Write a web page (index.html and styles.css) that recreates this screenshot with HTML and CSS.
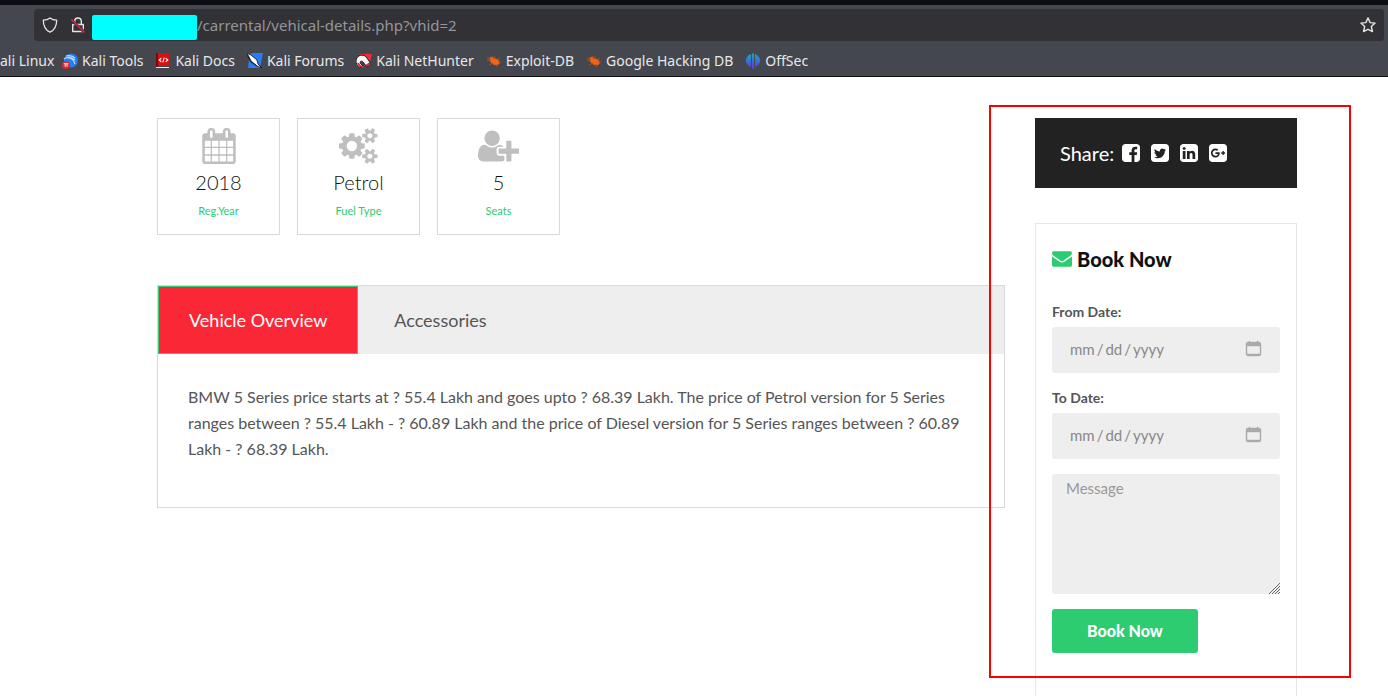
FILE: index.html
```html
<!DOCTYPE html>
<html lang="en">
<head>
<meta charset="utf-8">
<meta name="viewport" content="width=device-width, initial-scale=1">
<title>Car Rental | Vehicle Details</title>
<link rel="stylesheet" href="styles.css">
</head>
<body>
<header class="browser">
  <div class="urlbar">
    <svg class="url-icon" viewBox="0 0 16 16"><path d="M8 .9c2 1.500 4.300 2.100 6.700 2.300 0 5.500-1.700 9.600-6.700 12-5-2.400-6.700-6.500-6.700-12C3.700 3 6 2.400 8 .9z" fill="none" stroke="#e4e4e4" stroke-width="1.300" stroke-linejoin="round"/></svg>
    <svg class="url-icon" viewBox="0 0 16 16"><path d="M2.700 7.500h10.600v7H2.700zM4.700 7.500V4.300a3.300 3.300 0 0 1 6.600 0v3.200" fill="none" stroke="#e4e4e4" stroke-width="1.400" stroke-linejoin="round"/><path d="M1.500 3l13.300 12.500" stroke="#313136" stroke-width="3"/><path d="M1.200 2.200l13.500 13.300" stroke="#e22850" stroke-width="1.300"/></svg>
    <span class="host"></span><span class="path">/carrental/vehical-details.php?vhid=2</span>
    <svg class="url-icon star" viewBox="0 0 16 16"><path d="M8 .9l2.100 4.700 5 .5-3.800 3.400 1.200 5-4.500-2.200-4.500 2.200 1.200-5L.9 6.100l5-.5z" fill="none" stroke="#e4e4e4" stroke-width="1.400" stroke-linejoin="round"/></svg>
  </div>
  <nav class="bookmarks">
    <a href="#">ali Linux</a>
    <a href="#"><svg viewBox="0 0 16 16"><circle cx="9" cy="7.500" r="7" fill="#267cf0"/><path d="M2 6c4-3 7-2 11 1M6 5c4 0 6 2 7 6M4 3c4-1 6 0 9 2" stroke="#b9dcff" stroke-width="1.200" fill="none"/><circle cx="4" cy="12" r="3.900" fill="#e32532"/><path d="M1.800 10.700h4.600M3.200 10.700v3M5 10.700v3" stroke="#fff" stroke-width=".9"/></svg>Kali Tools</a>
    <a href="#"><svg viewBox="0 0 16 16"><path d="M1 0h2v14H1z" fill="#7b0710"/><path d="M3 0h11v13H3z" fill="#db1010"/><path d="M1 14h13v1H1z" fill="#eee"/><path d="M6.300 5.200L4.200 7l2.100 1.800M10.700 5.200L12.800 7l-2.100 1.800M9.200 4.700L7.800 9.300" stroke="#fff" fill="none" stroke-width="1.100"/></svg>Kali Docs</a>
    <a href="#"><svg viewBox="0 0 16 16"><path d="M4 0h12l-3 15H1l1-9z" fill="#267df5"/><path d="M0 0l4 2 6 5 1 4 4 4-5-2-6-5z" fill="#fff" stroke="#171b24" stroke-width=".9"/><path d="M0 2l4 7 6 4" fill="none" stroke="#171b24"/></svg>Kali Forums</a>
    <a href="#"><svg viewBox="0 0 16 16"><path d="M3 1h13l-3 12z" fill="#f02b38"/><path d="M0 8c0-6 8-8 11-3l4 6-4 3-4-5c-2-2-4 0-2 2l3 3c-4 2-8-1-8-6z" fill="#f5f5f5" stroke="#1c1c22"/><path d="M2 10c1 3 3 4 6 4M10 13l4-3" stroke="#d92031" stroke-width="2" fill="none"/></svg>Kali NetHunter</a>
    <a href="#"><svg viewBox="0 0 16 16"><path d="M3 5c2-2 5-1 7 1 2 0 4 2 4 4l-2 2c-3 1-7-1-8-4z" fill="#f36512"/><path d="M1 7l4 1M3 12l4-2M6 3l2 3M9 3v3M12 6l2-1M12 9l3 0M10 11l1 3M1 5l4 1" stroke="#a34f26"/></svg>Exploit-DB</a>
    <a href="#"><svg viewBox="0 0 16 16"><path d="M3 5c2-2 5-1 7 1 2 0 4 2 4 4l-2 2c-3 1-7-1-8-4z" fill="#f36512"/><path d="M1 7l4 1M3 12l4-2M6 3l2 3M9 3v3M12 6l2-1M12 9l3 0M10 11l1 3M1 5l4 1" stroke="#a34f26"/></svg>Google Hacking DB</a>
    <a href="#"><svg viewBox="0 0 16 16"><defs><linearGradient id="offsec" x2="0" y2="1"><stop stop-color="#17a9c4"/><stop offset="1" stop-color="#6038dc"/></linearGradient></defs><path d="M6 1v13C-1 11-1 4 6 1zM10 1v13C17 11 17 4 10 1zM7 .5h2V16H7z" fill="url(#offsec)"/></svg>OffSec</a>
  </nav>
</header>

<div class="page">
  <main class="details">
    <ul class="features">
      <li>
        <svg viewBox="0 0 1792 1792"><path d="M192 1664h288v-288h-288v288zm352 0h320v-288h-320v288zm-352-352h288v-320h-288v320zm352 0h320v-320h-320v320zm-352-384h288v-288h-288v288zm736 736h320v-288h-320v288zm-384-736h320v-288h-320v288zm768 736h288v-288h-288v288zm-384-352h320v-320h-320v320zm-352-864v-288q0-13-9.500-22.500t-22.500-9.500h-64q-13 0-22.500 9.500t-9.500 22.500v288q0 13 9.500 22.500t22.500 9.500h64q13 0 22.500-9.500t9.500-22.500zm736 864h288v-320h-288v320zm-384-384h320v-288h-320v288zm384 0h288v-288h-288v288zm32-480v-288q0-13-9.500-22.500t-22.500-9.500h-64q-13 0-22.500 9.500t-9.500 22.500v288q0 13 9.500 22.500t22.500 9.500h64q13 0 22.500-9.500t9.500-22.500zm384-64v1280q0 52-38 90t-90 38h-1408q-52 0-90-38t-38-90v-1280q0-52 38-90t90-38h128v-96q0-66 47-113t113-47h64q66 0 113 47t47 113v96h384v-96q0-66 47-113t113-47h64q66 0 113 47t47 113v96h128q52 0 90 38t38 90z"/></svg>
        <h5>2018</h5><p>Reg.Year</p>
      </li>
      <li>
        <svg viewBox="-64 0 1920 1792"><path d="M832 896q0-106-75-181t-181-75-181 75-75 181 75 181 181 75 181-75 75-181zm768 512q0-52-38-90t-90-38-90 38-38 90q0 53 37.500 90.500t90.500 37.500 90.500-37.500 37.500-90.500zm0-1024q0-52-38-90t-90-38-90 38-38 90q0 53 37.500 90.500t90.500 37.500 90.500-37.500 37.500-90.500zm-384 421v185q0 10-7 19.500t-16 10.500l-155 24q-11 35-32 76 34 48 90 115 7 11 7 20 0 12-7 19-23 30-82.500 89.500t-78.500 59.500q-11 0-21-7l-115-90q-37 19-77 31-11 108-23 155-7 24-30 24h-186q-11 0-20-7.500t-10-17.500l-23-153q-34-10-75-31l-118 89q-7 7-20 7-11 0-21-8-144-133-144-160 0-9 7-19 10-14 41-53t47-61q-23-44-35-82l-152-24q-10-1-17-9.500t-7-19.500v-185q0-10 7-19.500t16-10.500l155-24q11-35 32-76-34-48-90-115-7-11-7-20 0-12 7-20 22-30 82-89t79-59q11 0 21 7l115 90q34-18 77-32 11-108 23-154 7-24 30-24h186q11 0 20 7.500t10 17.500l23 153q34 10 75 31l118-89q8-7 20-7 11 0 21 8 144 133 144 160 0 8-7 19-12 16-42 54t-45 60q23 48 34 82l152 23q10 2 17 10.500t7 19.500zm640 533v140q0 16-149 31-12 27-30 52 51 113 51 138 0 4-4 7-122 71-124 71-8 0-46-47t-52-68q-20 2-30 2t-30-2q-14 21-52 68t-46 47q-2 0-124-71-4-3-4-7 0-25 51-138-18-25-30-52-149-15-149-31v-140q0-16 149-31 13-29 30-52-51-113-51-138 0-4 4-7 4-2 35-20t59-34 30-16q8 0 46 46.500t52 67.500q20-2 30-2t30 2q51-71 92-112l6-2q4 0 124 70 4 3 4 7 0 25-51 138 17 23 30 52 149 15 149 31zm0-1024v140q0 16-149 31-12 27-30 52 51 113 51 138 0 4-4 7-122 71-124 71-8 0-46-47t-52-68q-20 2-30 2t-30-2q-14 21-52 68t-46 47q-2 0-124-71-4-3-4-7 0-25 51-138-18-25-30-52-149-15-149-31v-140q0-16 149-31 13-29 30-52-51-113-51-138 0-4 4-7 4-2 35-20t59-34 30-16q8 0 46 46.500t52 67.500q20-2 30-2t30 2q51-71 92-112l6-2q4 0 124 70 4 3 4 7 0 25-51 138 17 23 30 52 149 15 149 31z"/></svg>
        <h5>Petrol</h5><p>Fuel Type</p>
      </li>
      <li>
        <svg viewBox="0 0 2048 1792"><path d="M704 896q-159 0-271.500-112.500t-112.500-271.500 112.500-271.500 271.500-112.500 271.500 112.500 112.500 271.500-112.500 271.500-271.500 112.500zm960 128h352q13 0 22.500 9.500t9.500 22.500v192q0 13-9.500 22.500t-22.500 9.500h-352v352q0 13-9.500 22.500t-22.500 9.500h-192q-13 0-22.500-9.500t-9.500-22.500v-352h-352q-13 0-22.500-9.500t-9.500-22.500v-192q0-13 9.500-22.500t22.500-9.500h352v-352q0-13 9.500-22.500t22.500-9.500h192q13 0 22.500 9.500t9.500 22.500v352zm-736 224q0 52 38 90t90 38h256v238q-68 50-171 50h-874q-121 0-194-69t-73-190q0-53 3.500-103.500t14-109 26.500-108.500 43-97.500 62-81 85.500-53.500 111.500-20q19 0 39 17 79 61 154.500 91.500t164.500 30.500 164.500-30.500 154.500-91.500q20-17 39-17 132 0 217 96h-223q-52 0-90 38t-38 90v192z"/></svg>
        <h5>5</h5><p>Seats</p>
      </li>
    </ul>

    <section class="info">
      <div class="tabs" role="tablist">
        <button type="button" role="tab" id="tab-overview" aria-selected="true" aria-controls="overview">Vehicle Overview</button>
        <button type="button" role="tab" aria-selected="false">Accessories</button>
      </div>
      <div class="panel" id="overview" role="tabpanel" aria-labelledby="tab-overview">
        <p>BMW 5 Series price starts at ? 55.4 Lakh and goes upto ? 68.39 Lakh. The price of Petrol version for 5 Series ranges between ? 55.4 Lakh - ? 60.89 Lakh and the price of Diesel version for 5 Series ranges between ? 60.89 Lakh - ? 68.39 Lakh.</p>
      </div>
    </section>
  </main>

  <aside class="sidebar">
    <div class="share">
      <span>Share:</span>
      <a href="#" aria-label="Facebook"><svg viewBox="128 128 1536 1536"><path d="M1376 128q119 0 203.500 84.500t84.500 203.500v960q0 119-84.500 203.500t-203.500 84.500h-188v-595h199l30-232h-229v-148q0-56 23.500-84t91.500-28l122-1v-207q-63-9-178-9-136 0-217.500 80t-81.500 226v171h-200v232h200v595h-532q-119 0-203.500-84.500t-84.500-203.500v-960q0-119 84.500-203.500t203.500-84.500h960z"/></svg></a>
      <a href="#" aria-label="Twitter"><svg viewBox="128 128 1536 1536"><path d="M1408 610q-56 25-121 34 68-40 93-117-65 38-134 51-61-66-153-66-87 0-148.500 61.500t-61.500 148.500q0 29 5 48-129-7-242-65t-192-155q-29 50-29 106 0 114 91 175-47-1-100-26v2q0 75 50 133.500t123 72.500q-29 8-51 8-13 0-39-4 21 63 74.500 104t121.500 42q-116 90-261 90-26 0-50-3 148 94 322 94 112 0 210-35.500t168-95 120.500-137 75-162 24.500-168.500q0-18-1-27 63-45 105-109zm256-194v960q0 119-84.500 203.500t-203.500 84.500h-960q-119 0-203.500-84.500t-84.500-203.500v-960q0-119 84.500-203.500t203.500-84.500h960q119 0 203.500 84.500t84.500 203.500z"/></svg></a>
      <a href="#" aria-label="LinkedIn"><svg viewBox="128 128 1536 1536"><path d="M365 1414h231v-694h-231v694zm246-908q-1-52-36-86t-93-34-94.500 34-36.500 86q0 51 35.500 85.500t92.500 34.500h1q59 0 95-34.500t36-85.500zm585 908h231v-398q0-154-73-233t-193-79q-136 0-209 117h2v-101h-231q3 66 0 694h231v-388q0-38 7-56 15-35 45-59.500t74-24.500q116 0 116 157v371zm468-998v960q0 119-84.500 203.500t-203.500 84.500h-960q-119 0-203.500-84.500t-84.500-203.500v-960q0-119 84.500-203.500t203.500-84.500h960q119 0 203.500 84.500t84.500 203.500z"/></svg></a>
      <a href="#" aria-label="Google Plus"><svg viewBox="128 128 1536 1536"><path d="M1045 905q0-26-6-64h-362v132h217q-3 24-16.500 50t-37.500 53-66.500 44.500-96.500 17.500q-99 0-169-71t-70-171 70-171 169-71q92 0 153 59l104-101q-108-100-257-100-160 0-272 112.500t-112 271.500 112 271.500 272 112.500q165 0 266.500-105t101.500-270zm345 46h109v-110h-109v-110h-110v110h-110v110h110v110h110v-110zm274-535v960q0 119-84.500 203.500t-203.500 84.500h-960q-119 0-203.500-84.500t-84.500-203.500v-960q0-119 84.500-203.500t203.500-84.500h960q119 0 203.500 84.500t84.500 203.500z"/></svg></a>
    </div>

    <form class="booking">
      <h5><svg viewBox="0 256 1792 1408"><path d="M1792 710v794q0 66-47 113t-113 47h-1472q-66 0-113-47t-47-113v-794q44 49 101 87 362 246 497 345 57 42 92.500 65.500t94.500 48 110 24.500h2q51 0 110-24.500t94.500-48 92.500-65.500q170-123 498-345 57-39 100-87zm0-294q0 79-49 151t-122 123q-376 261-468 325-10 7-42.500 31t-54 38.500-52 32.500-57.500 27-50 9h-2q-23 0-50-9t-57.500-27-52-32.500-54-38.500-42.500-31q-91-64-262-182.500t-205-142.500q-62-42-117-115.500t-55-136.500q0-78 41.500-130t118.500-52h1472q65 0 112.500 47t47.500 113z"/></svg>Book Now</h5>
      <div class="field">
        <label for="from">From Date:</label>
        <div class="date"><input type="date" id="from"><svg viewBox="0 0 15 15"><path d="M3 0h1v1h7V0h1v1h1q2 0 2 2v10q0 2-2 2H2q-2 0-2-2V3q0-2 2-2h1zM1 5v7q0 1 1 1h11q1 0 1-1V5z" fill-rule="evenodd" stroke-width=".4"/></svg></div>
      </div>
      <div class="field">
        <label for="to">To Date:</label>
        <div class="date"><input type="date" id="to"><svg viewBox="0 0 15 15"><path d="M3 0h1v1h7V0h1v1h1q2 0 2 2v10q0 2-2 2H2q-2 0-2-2V3q0-2 2-2h1zM1 5v7q0 1 1 1h11q1 0 1-1V5z" fill-rule="evenodd" stroke-width=".4"/></svg></div>
      </div>
      <div class="message">
        <textarea placeholder="Message" aria-label="Message"></textarea>
        <svg class="grip" viewBox="0 0 11 11"><path d="M0 11L11 0M3 11l8-8M6 11l5-5M9 11l2-2"/></svg>
      </div>
      <button type="submit">Book Now</button>
    </form>
    <div class="highlight"></div>
  </aside>
</div>
</body>
</html>
```

FILE: styles.css
```css
* { box-sizing: border-box; }

body {
  margin: 0;
  min-height: 100vh;
  display: flex;
  flex-direction: column;
  background: #fff;
  color: #555;
  font-family: Lato, sans-serif;
  font-size: 16px;
  line-height: 26px;
  text-rendering: optimizeLegibility;
}

h5, p, ul { margin: 0; padding: 0; }
ul { list-style: none; }
a { color: inherit; text-decoration: none; }
button, input, textarea { font-family: inherit; border: 0; text-rendering: inherit; }

/* Browser toolbar */
.browser {
  overflow: hidden;
  padding: 4px 4px 0 0;
  border-top: 5px solid #0d0e13;
  border-bottom: 1px solid #0d0e13;
  background: #44474e;
  color: #e8e8e8;
  font-family: "Noto Sans", sans-serif;
  font-size: 14px;
}

.urlbar {
  display: flex;
  align-items: center;
  height: 32px;
  margin-left: 34px;
  padding: 0 8px;
  border-radius: 4px;
  background: #313136;
  font-size: 15px;
}

.url-icon { width: 16px; height: 16px; margin-right: 12px; flex: none; }
.url-icon.star { margin: 0 0 0 auto; }

.host {
  width: 105px;
  height: 25px;
  margin: 4px 0 0 -6px;
  border-radius: 2px;
  background: #0ff;
}

.path { color: #95959a; }

.bookmarks {
  display: flex;
  align-items: center;
  gap: 12px;
  height: 35px;
  padding-top: 4px;
}

.bookmarks a { display: flex; align-items: center; gap: 4px; white-space: nowrap; }
.bookmarks a:first-child { width: 50px; }
.bookmarks svg { width: 16px; height: 16px; }

/* Page */
.page {
  flex: 1;
  display: flex;
  gap: 30px;
  padding: 41px 91px 0 157px;
}

.details { flex: 1; min-width: 0; }

.features { display: flex; gap: 17px; margin-bottom: 50px; }

.features li {
  width: 123px;
  padding: 9px 0;
  border: 1px solid #d9d9d9;
  text-align: center;
}

.features svg { display: block; height: 36px; margin: 0 auto 4px; fill: #bfbfbf; }
.features h5 { color: #111; font-size: 20px; font-weight: 300; line-height: 28px; }
.features p { color: #2dcc70; font-size: 11px; line-height: 29px; }

.info { border: 1px solid #d9d9d9; }

.tabs { display: flex; gap: 5px; background: #eee; }

.tabs button {
  height: 68px;
  padding: 0 30px;
  border: 1px solid transparent;
  background: none;
  color: #555;
  font-size: 18px;
}

.tabs button[aria-selected="true"] {
  border-color: #2dcc70;
  background: #fa2837;
  color: #fff;
}

.panel { padding: 30px 30px 45px; }

/* Sidebar */
.sidebar {
  position: relative;
  display: flex;
  flex-direction: column;
  gap: 35px;
  width: 262px;
}

.share {
  display: flex;
  align-items: center;
  gap: 11px;
  height: 70px;
  padding: 0 25px;
  background: #222;
  color: #fff;
  font-size: 20px;
}

.share span { margin-right: -3px; }
.share svg { display: block; width: 18px; height: 18px; fill: #fff; }

.booking {
  flex: 1;
  padding: 20px 16px 43px;
  border: 1px solid #e6e6e6;
  border-bottom: 0;
}

.booking h5 {
  display: flex;
  align-items: center;
  gap: 5px;
  margin-bottom: 28px;
  color: #111;
  font-size: 20px;
  font-weight: 900;
  line-height: 30px;
}

.booking h5 svg { width: 20px; height: 16px; fill: #2dcc70; }

.field { margin-bottom: 15px; }

label {
  display: block;
  margin-bottom: 5px;
  font-size: 14px;
  font-weight: 700;
  line-height: 20px;
}

.date, .message { position: relative; }

.date input {
  display: block;
  width: 100%;
  height: 46px;
  padding: 0 17px 2px;
  border-radius: 3px;
  background: #eee;
  color: #888;
  font-size: 15px;
}

.date input::-webkit-datetime-edit-fields-wrapper { padding: 0; }
.date input::-webkit-datetime-edit-text { padding: 0 1px; }
.date input::-webkit-calendar-picker-indicator { opacity: 0; }

.date svg {
  position: absolute;
  top: 14px;
  right: 19px;
  width: 15px;
  height: 15px;
  fill: #aaa;
  stroke: #aaa;
  overflow: visible;
  pointer-events: none;
}

textarea {
  display: block;
  width: 100%;
  height: 120px;
  padding: 4px 14px;
  border-radius: 3px;
  background: #eee;
  color: #555;
  font-size: 15px;
  line-height: 20px;
  resize: none;
}

textarea::placeholder { color: #999; }

.grip {
  position: absolute;
  right: 0;
  bottom: 0;
  width: 11px;
  height: 11px;
  stroke: #666;
}

.booking button {
  display: block;
  height: 44px;
  margin-top: 15px;
  padding: 0 35px 2px;
  border-radius: 3px;
  background: #2dcc70;
  color: #fff;
  font-size: 16px;
  font-weight: 900;
}

.highlight {
  position: absolute;
  top: -13px;
  right: -54px;
  bottom: 18px;
  left: -46px;
  border: 2px solid #f00;
  pointer-events: none;
}
```
